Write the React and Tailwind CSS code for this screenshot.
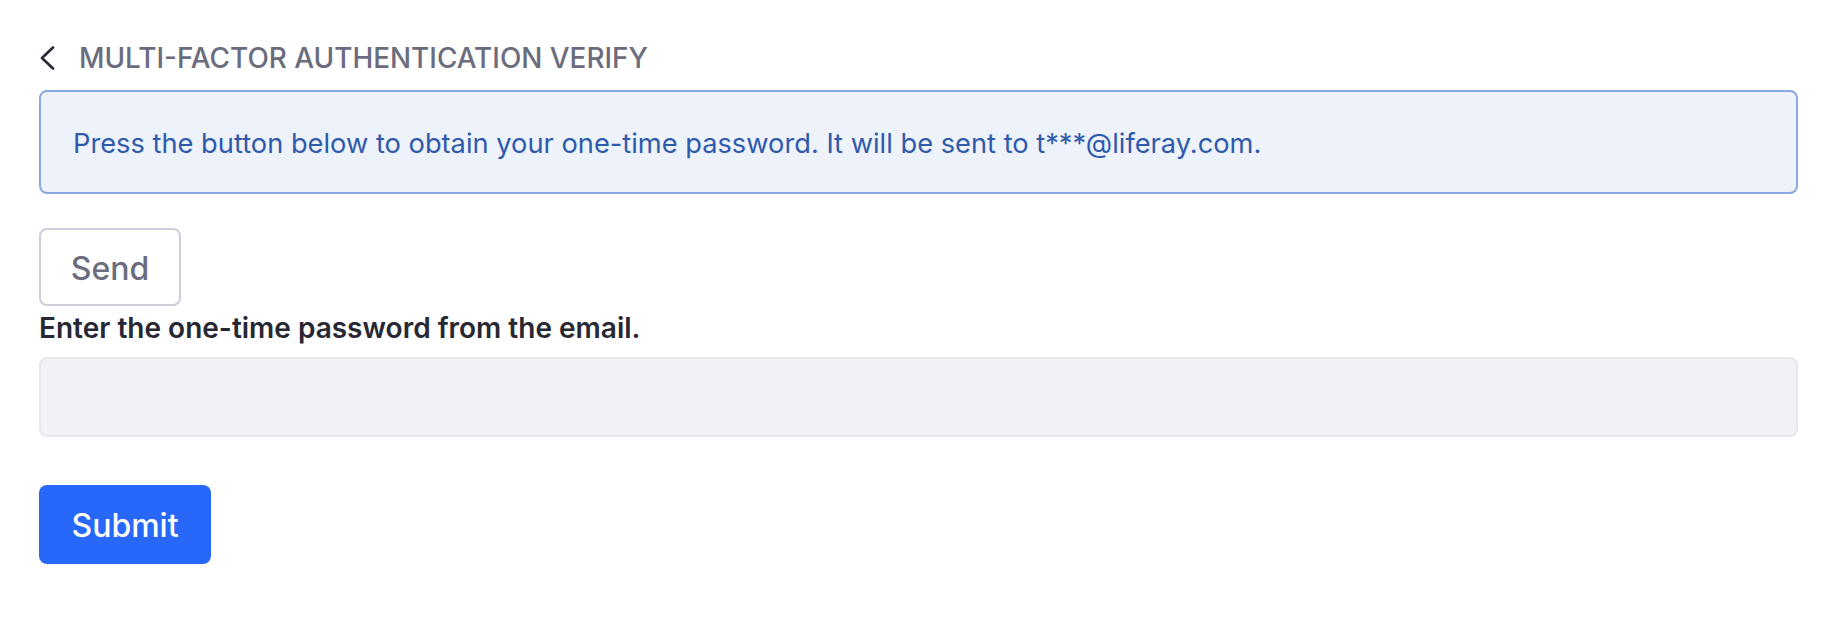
export default function App() {
  return (
    <div
      className="min-h-screen bg-white pl-[39px] pr-[50px] pt-[36px]"
      style={{ fontFamily: "Inter, 'Noto Sans', sans-serif" }}
    >
      <div className="flex h-[44px] items-center">
        <button type="button" className="flex h-[44px] w-[40px] items-center text-[#272833]">
          <svg width="16" height="24" viewBox="0 0 16 24" fill="none">
            <path d="M14 1.5 3 12l11 10.5" stroke="currentColor" strokeWidth="2.6" strokeLinecap="round" strokeLinejoin="round" />
          </svg>
        </button>
        <h1 className="pt-[1px] text-[27.9px] font-medium uppercase leading-none text-[#6b6c7e]">
          Multi-Factor Authentication Verify
        </h1>
      </div>

      <div className="mt-[10px] flex h-[104px] items-center rounded-[8px] border-2 border-[#89a7e0] bg-[#eef2fa] pl-[32px] pt-[3px]">
        <p className="text-[27.25px] leading-none text-[#2e5aac]">
          Press the button below to obtain your one-time password. It will be sent to t***@liferay.com.
        </p>
      </div>

      <button
        type="button"
        className="mt-[34px] h-[78px] w-[142px] rounded-[8px] border-2 border-[#cdced9] bg-white pt-[3px] text-[32px] font-medium text-[#6b6c7e]"
      >
        Send
      </button>

      <label className="mb-[8px] mt-[2px] block text-[28px] font-semibold leading-[41px] text-[#272833]">
        Enter the one-time password from the email.
      </label>
      <input
        type="text"
        className="block h-[80px] w-full rounded-[8px] border-2 border-[#e7e7ed] bg-[#f1f2f5] px-[32px] text-[27px] text-[#272833] outline-none"
      />

      <button
        type="button"
        className="mt-[48px] h-[79px] w-[172px] rounded-[8px] bg-[#2767f9] pt-[2px] text-[32px] font-medium text-white"
      >
        Submit
      </button>
    </div>
  );
}
